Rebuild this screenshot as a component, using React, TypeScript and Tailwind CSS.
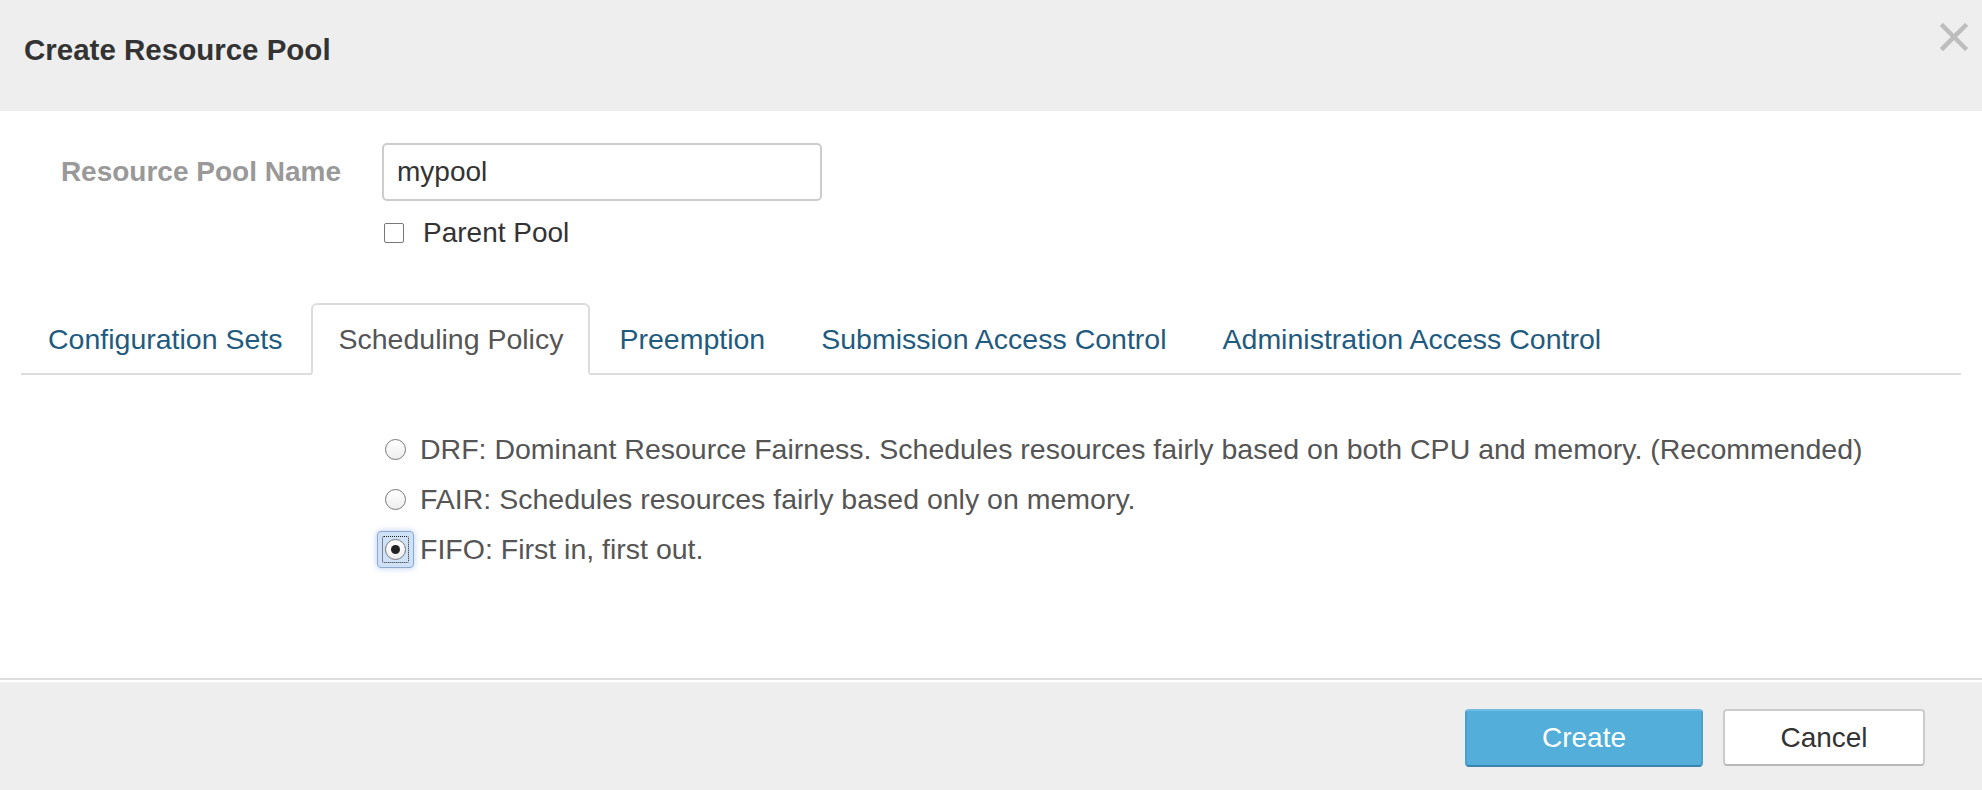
import { useState } from 'react'

type Policy = 'drf' | 'fair' | 'fifo'

const tabs = [
    'Configuration Sets',
    'Scheduling Policy',
    'Preemption',
    'Submission Access Control',
    'Administration Access Control',
]

const policies: { id: Policy; label: string }[] = [
    { id: 'drf', label: 'DRF: Dominant Resource Fairness. Schedules resources fairly based on both CPU and memory. (Recommended)' },
    { id: 'fair', label: 'FAIR: Schedules resources fairly based only on memory.' },
    { id: 'fifo', label: 'FIFO: First in, first out.' },
]

function Radio({ checked, focused }: { checked: boolean; focused: boolean }) {
    const dot = (
        <span className="w-[21px] h-[21px] rounded-full border-[1.5px] border-[#777] bg-gradient-to-b from-white to-[#eeeeee] flex items-center justify-center">
            {checked && <span className="w-[9px] h-[9px] rounded-full bg-[#222]" />}
        </span>
    )
    if (!focused) {
        return <span className="w-[37px] h-[37px] flex items-center justify-center shrink-0">{dot}</span>
    }
    return (
        <span className="w-[37px] h-[37px] rounded-[4px] border-[1.5px] border-[#8fa9cc] bg-[#cfe1f6] shadow-[0_0_6px_rgba(90,140,220,0.45)] flex items-center justify-center shrink-0">
            <span className="p-[2px] border border-dotted border-[#222] rounded-[2px] flex">{dot}</span>
        </span>
    )
}

export default function App() {
    const [activeTab, setActiveTab] = useState(1)
    const [policy, setPolicy] = useState<Policy>('fifo')
    const [name, setName] = useState('mypool')
    const [parent, setParent] = useState(false)

    return (
        <div className="w-[1982px] h-[790px] bg-white flex flex-col font-['Liberation_Sans',Arial,sans-serif] text-[28px] text-[#333]">
            {/* Header */}
            <div className="h-[111px] shrink-0 bg-[#eeeeee] flex justify-between pl-[24px] pr-[14px]">
                <h3 className="mt-[33px] text-[29.5px] leading-[34px] font-bold text-[#333]">Create Resource Pool</h3>
                <button className="mt-[23px] self-start w-[28px] h-[28px] text-[#bdbdbd]" title="Close">
                    <svg viewBox="0 0 28 28" width="28" height="28">
                        <path d="M3 3 L25 25 M25 3 L3 25" stroke="currentColor" strokeWidth="4.5" strokeLinecap="square" />
                    </svg>
                </button>
            </div>

            {/* Body */}
            <div className="flex-1 flex flex-col">
                <div className="flex items-center mt-[32px]">
                    <label className="w-[341px] text-right font-bold text-[#999]">Resource Pool Name</label>
                    <input
                        value={name}
                        onChange={e => setName(e.target.value)}
                        className="ml-[41px] w-[440px] h-[58px] px-[13px] border-2 border-[#cccccc] rounded-[5px] text-[28px] text-[#333] outline-none"
                    />
                </div>
                <label className="flex items-center ml-[384px] mt-[21px] h-[22px] gap-[19px] text-[#333] cursor-pointer" onClick={() => setParent(!parent)}>
                    <span className="w-[20px] h-[20px] border-[1.5px] border-[#777] rounded-[2px] bg-white flex items-center justify-center">
                        {parent && <span className="w-[10px] h-[10px] bg-[#333]" />}
                    </span>
                    Parent Pool
                </label>

                {/* Tabs */}
                <ul className="flex mx-[21px] mt-[59px] border-b-2 border-[#dddddd] text-[28.5px]">
                    {tabs.map((t, i) => (
                        <li key={t} className="mr-[2px] -mb-[2px]">
                            <button
                                onClick={() => setActiveTab(i)}
                                className={`h-[72px] px-[25px] flex items-center border-2 rounded-t-[6px] leading-[34px] ${i === activeTab
                                    ? 'bg-white border-[#dddddd] border-b-white text-[#555]'
                                    : 'border-transparent text-[#1f5b7f]'
                                    }`}
                            >
                                {t}
                            </button>
                        </li>
                    ))}
                </ul>

                {/* Scheduling policy */}
                <div className="flex flex-col ml-[377px] mt-[49px] text-[28.5px] text-[#555]">
                    {policies.map(p => (
                        <label key={p.id} className="h-[50px] flex items-center gap-[6px] cursor-pointer" onClick={() => setPolicy(p.id)}>
                            <Radio checked={policy === p.id} focused={p.id === 'fifo'} />
                            <span>{p.label}</span>
                        </label>
                    ))}
                </div>
            </div>

            {/* Footer */}
            <div className="h-[112px] shrink-0 bg-[#eeeeee] border-t-2 border-[#dddddd] shadow-[inset_0_2px_0_#ffffff] flex items-start justify-end gap-[20px] pt-[29px] pr-[57px]">
                <button className="w-[238px] h-[58px] rounded-[4px] bg-[#53aed9] border-2 border-[#4a9fcb] border-t-[#6fbde2] border-b-[#3a84ae] text-white">
                    Create
                </button>
                <button className="w-[202px] h-[57px] rounded-[4px] bg-white border-2 border-[#cccccc] border-b-[#b8b8b8] text-[#333]">
                    Cancel
                </button>
            </div>
        </div>
    )
}
